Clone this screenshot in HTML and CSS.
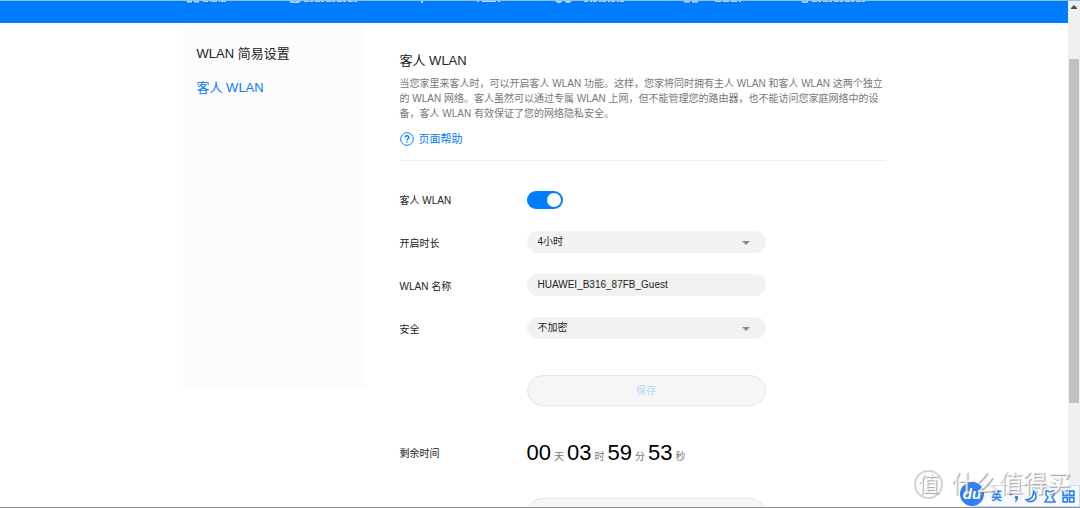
FILE: index.html
```html
<!DOCTYPE html>
<html lang="zh-CN">
<head>
<meta charset="utf-8">
<meta name="viewport" content="width=device-width, initial-scale=1">
<title>客人 WLAN</title>
<link rel="stylesheet" href="styles.css">
</head>
<body>
<div class="screen">
  <div class="view">
    <header class="topbar">
      <svg class="topbar-marks" width="703" height="2" viewBox="0 0 703 2" aria-hidden="true">
        <g fill="none" stroke="#b5d8ff" stroke-width="1">
          <path d="M4 .5h5M11 .5h5" stroke-width="2"/>
          <path d="M20 .5h24" stroke-dasharray="5 2 1 1"/>
          <path d="M107 0q5 3 10 0" stroke-width="2"/>
          <path d="M121 .5h54" stroke-dasharray="5 1 3 2"/>
          <path d="M239 0v2" stroke-width="2"/>
          <path d="M294 .5h23" stroke-dasharray="2 3 14 2"/>
          <path d="M373 0q3 2 6 0M382 0q3 2 6 0" stroke-width="2"/>
          <path d="M401 .5h42" stroke-dasharray="4 2 2 1"/>
          <path d="M501 .5h6M509 .5h6" stroke-width="2"/>
          <path d="M532 .5h26" stroke-dasharray="6 2"/>
          <path d="M619 0l3 2 3-2" stroke-width="2"/>
          <path d="M629 .5h55" stroke-dasharray="5 1 3 2"/>
        </g>
      </svg>
    </header>
    <div class="layout">
      <nav class="sidebar" aria-label="WLAN">
        <a class="side-link" href="#simple">WLAN 简易设置</a>
        <a class="side-link is-active" href="#guest" aria-current="page">客人 WLAN</a>
      </nav>
      <main class="content">
        <h1 class="title">客人 WLAN</h1>
        <p class="intro">当您家里来客人时，可以开启客人 WLAN 功能。这样，您家将同时拥有主人 WLAN 和客人 WLAN 这两个独立的 WLAN 网络。客人虽然可以通过专属 WLAN 上网，但不能管理您的路由器，也不能访问您家庭网络中的设备，客人 WLAN 有效保证了您的网络隐私安全。</p>
        <a class="help" href="#help">
          <svg width="14" height="14" viewBox="0 0 14 14" fill="none" stroke="currentColor" aria-hidden="true">
            <circle cx="7" cy="7" r="6.3" stroke-width="1"/>
            <path d="M5.1 5.6C5.1 3.2 8.9 3.2 8.9 5.5 8.9 6.8 7 6.8 7 8.2M7 9.2v1.4" stroke-width="1.4"/>
          </svg>
          <span>页面帮助</span>
        </a>
        <form class="form">
          <label class="label switch-label" for="guest">客人 WLAN</label>
          <input class="switch" type="checkbox" role="switch" id="guest" checked>
          <label class="label" for="duration">开启时长</label>
          <span class="select-box">
            <select class="field" id="duration"><option>4小时</option></select>
            <svg class="caret" width="8" height="4" viewBox="0 0 8 4" aria-hidden="true"><path d="M0 0h8L4 4z" fill="#8c8c8c"/></svg>
          </span>
          <label class="label" for="ssid">WLAN 名称</label>
          <input class="field" type="text" id="ssid" value="HUAWEI_B316_87FB_Guest">
          <label class="label" for="security">安全</label>
          <span class="select-box">
            <select class="field" id="security"><option>不加密</option></select>
            <svg class="caret" width="8" height="4" viewBox="0 0 8 4" aria-hidden="true"><path d="M0 0h8L4 4z" fill="#8c8c8c"/></svg>
          </span>
          <button class="pill save" type="button" disabled>保存</button>
          <span class="label remain-label">剩余时间</span>
          <div class="timer"><b>00</b><span>天</span><b>03</b><span>时</span><b>59</b><span>分</span><b>53</b><span>秒</span></div>
          <button class="pill extend" type="button" aria-label="延长"></button>
        </form>
      </main>
    </div>
  </div>
  <div class="scrollbar" aria-hidden="true">
    <svg class="scroll-up" width="6" height="4" viewBox="0 0 6 4"><path d="M3 0l3 3v1H0V3z" fill="#505050"/></svg>
    <div class="thumb"></div>
  </div>
  <div class="ime">
    <span class="ime-lang">英</span>
    <svg width="11" height="12" viewBox="0 0 11 12" fill="#2f7ff5" aria-hidden="true"><circle cx="3" cy="4" r="1.4"/><path d="M7 6h3v3l-2 3H7l1-3H7z"/></svg>
    <svg width="13" height="13" viewBox="0 0 12 12" fill="none" stroke="#2f7ff5" stroke-width="1.5" aria-hidden="true"><path d="M8 1c3 3 3 7 0 9-2 1-5 1-7-1 5 0 7-3 7-8z"/></svg>
    <svg width="12" height="13" viewBox="0 0 12 13" fill="none" stroke="#2f7ff5" stroke-width="1.5" aria-hidden="true"><path d="M2 1h2q2 2 4 0h2v4L8 7l3 5H1l3-5-2-2z"/></svg>
    <svg width="13" height="13" viewBox="0 0 12 12" fill="none" stroke="#2f7ff5" stroke-width="1.5" aria-hidden="true"><path d="M1 1h4v4H1zM7 1h4v4H7zM1 7h4v4H1zM7 7h4v4H7z"/></svg>
  </div>
  <div class="du"><i>du</i></div>
  <div class="watermark" aria-hidden="true"><span class="seal">值</span><span class="mark">什么值得买</span></div>
</div>
</body>
</html>
```
FILE: styles.css
```css
* { box-sizing: border-box; }
body {
  margin: 0;
  background: #fff;
  color: #222;
  font: 10px/15px "Liberation Sans", "Noto Sans CJK SC", sans-serif;
}
a { text-decoration: none; color: inherit; }
.screen {
  position: relative;
  display: flex;
  height: 100vh;
  overflow: hidden;
  border-top: 1px solid #8fc3fb;
  border-bottom: 1px solid #8c8c8c;
}
.view { flex: 1; min-width: 0; overflow: hidden; }
.topbar {
  display: flex;
  justify-content: center;
  align-items: flex-start;
  height: 22px;
  background: #007dff;
}
.topbar-marks { display: block; }
.layout {
  display: grid;
  grid-template-columns: 183px minmax(0, 486px);
  column-gap: 34px;
  justify-content: center;
  align-items: start;
}
.sidebar {
  display: flex;
  flex-direction: column;
  gap: 14px;
  min-height: 366px;
  padding: 21px 14px;
  background: #fcfcfc;
}
.side-link { font-size: 13px; line-height: 20px; }
.is-active { color: #007dff; }
.title { margin: 28px 0 5px; font-size: 13px; line-height: 20px; font-weight: 400; }
.intro { margin: 0; color: #777; }
.help {
  display: flex;
  align-items: center;
  gap: 5px;
  margin-top: 9px;
  padding-bottom: 12px;
  border-bottom: 1px solid #eee;
  color: #007dff;
  font-size: 11px;
  line-height: 18px;
}
.form {
  display: grid;
  grid-template-columns: 127px 239px;
  row-gap: 21px;
  padding-top: 29px;
}
.label { padding-top: 4px; line-height: 18px; }
.switch-label { padding-top: 2px; }
.switch {
  appearance: none;
  display: flex;
  justify-content: flex-end;
  width: 36px;
  height: 18px;
  margin: 1px 0;
  padding: 2px;
  border-radius: 9px;
  background: #007dff;
}
.switch::before { content: ""; width: 14px; height: 14px; border-radius: 50%; background: #fff; }
.select-box { position: relative; display: block; }
.field {
  appearance: none;
  display: block;
  width: 100%;
  height: 22px;
  padding: 0 11px 2px;
  border: 0;
  border-radius: 11px;
  background: #f2f2f2;
  color: #222;
  font: inherit;
}
.caret { position: absolute; right: 16px; top: 10px; }
.pill {
  grid-column: 2;
  height: 31px;
  border: 1px solid #e6e6e6;
  border-radius: 16px;
  background: #f6f6f6;
  color: #b3d6ff;
  font: inherit;
}
.save { margin-top: 15px; }
.remain-label { padding-top: 18px; }
.timer { display: flex; align-items: baseline; gap: 3px; padding-top: 13px; color: #777; }
.timer b { color: #000; font-size: 22px; line-height: 26px; font-weight: 400; }
.extend { margin-top: 11px; }
.scrollbar { width: 12px; padding: 4px 1px; background: #f0f0f0; }
.scroll-up { display: block; margin: 0 auto; }
.thumb { height: 69%; margin-top: 50px; background: #c1c1c1; }
.ime {
  position: absolute;
  right: 0;
  bottom: 0;
  display: flex;
  align-items: center;
  justify-content: flex-end;
  gap: 6px;
  width: 108px;
  height: 22px;
  padding: 0 4px;
  border: 1px solid #c5dbf9;
  background: #f7faff;
}
.ime-lang { color: #2f7ff5; font-size: 11px; font-weight: 700; }
.du {
  position: absolute;
  right: 96px;
  bottom: 1px;
  width: 24px;
  height: 24px;
  border-radius: 50%;
  background: #2f7ff5;
  color: #fff;
  font-size: 15px;
  line-height: 23px;
  font-weight: 700;
  text-align: center;
}
.watermark {
  position: absolute;
  right: 9px;
  bottom: 8px;
  display: flex;
  align-items: center;
  gap: 8px;
  color: rgba(255, 255, 255, .8);
  text-shadow: 1px 1px 1px rgba(120, 120, 120, .7);
}
.seal {
  width: 29px;
  height: 29px;
  border: 2px solid #d4d4d4;
  border-radius: 50%;
  font-size: 21px;
  line-height: 24px;
  text-align: center;
}
.mark { font-size: 24px; line-height: 30px; }
```
